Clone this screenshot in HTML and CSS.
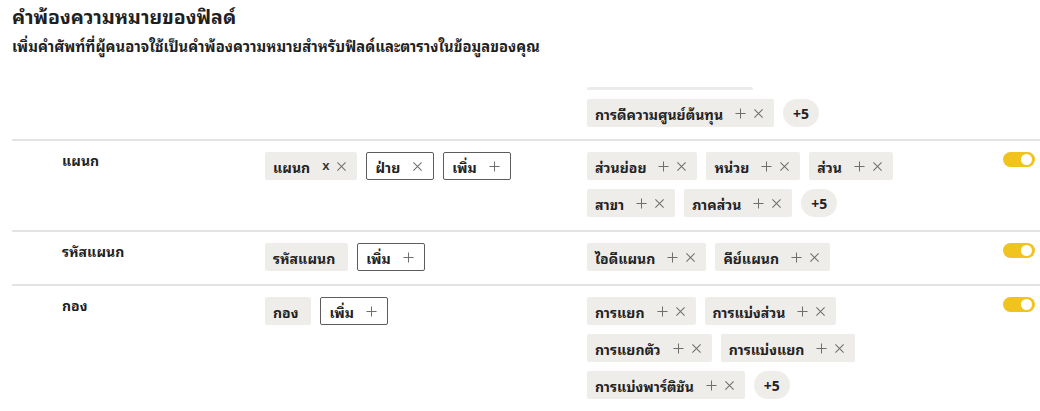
FILE: index.html
```html
<!DOCTYPE html>
<html lang="th">
<head>
<meta charset="utf-8">
<link rel="stylesheet" href="styles.css">
</head>
<body>
<div class="page">
  <h1 class="title">คำพ้องความหมายของฟิลด์</h1>
  <p class="subtitle">เพิ่มคำศัพท์ที่ผู้คนอาจใช้เป็นคำพ้องความหมายสำหรับฟิลด์และตารางในข้อมูลของคุณ</p>

  <div class="row row-tail">
    <div class="c-label"></div>
    <div class="c-names"></div>
    <div class="c-syn">
      <div class="scrollbar"></div>
      <div class="chips">
        <div class="line">
          <span class="chip">การดีความศูนย์ต้นทุน<span class="ic"><svg viewBox="0 0 12 12"><path d="M6 0.5V11.5M0.5 6H11.5"/></svg><svg viewBox="0 0 12 12"><path d="M1.5 1.5L10.5 10.5M10.5 1.5L1.5 10.5"/></svg></span></span>
          <span class="more">+5</span>
        </div>
      </div>
    </div>
    <div class="c-toggle"></div>
  </div>

  <div class="row">
    <div class="c-label">แผนก</div>
    <div class="c-names">
      <div class="chips">
        <div class="line">
          <span class="chip">แผนก<span class="ic"><span class="xt">x</span><svg viewBox="0 0 12 12"><path d="M1.5 1.5L10.5 10.5M10.5 1.5L1.5 10.5"/></svg></span></span>
          <span class="chip outline">ฝ่าย<span class="ic"><svg viewBox="0 0 12 12"><path d="M1.5 1.5L10.5 10.5M10.5 1.5L1.5 10.5"/></svg></span></span>
          <span class="chip outline">เพิ่ม<span class="ic"><svg viewBox="0 0 12 12"><path d="M6 0.5V11.5M0.5 6H11.5"/></svg></span></span>
        </div>
      </div>
    </div>
    <div class="c-syn">
      <div class="chips">
        <div class="line">
          <span class="chip">ส่วนย่อย<span class="ic"><svg viewBox="0 0 12 12"><path d="M6 0.5V11.5M0.5 6H11.5"/></svg><svg viewBox="0 0 12 12"><path d="M1.5 1.5L10.5 10.5M10.5 1.5L1.5 10.5"/></svg></span></span>
          <span class="chip">หน่วย<span class="ic"><svg viewBox="0 0 12 12"><path d="M6 0.5V11.5M0.5 6H11.5"/></svg><svg viewBox="0 0 12 12"><path d="M1.5 1.5L10.5 10.5M10.5 1.5L1.5 10.5"/></svg></span></span>
          <span class="chip">ส่วน<span class="ic"><svg viewBox="0 0 12 12"><path d="M6 0.5V11.5M0.5 6H11.5"/></svg><svg viewBox="0 0 12 12"><path d="M1.5 1.5L10.5 10.5M10.5 1.5L1.5 10.5"/></svg></span></span>
        </div>
        <div class="line">
          <span class="chip">สาขา<span class="ic"><svg viewBox="0 0 12 12"><path d="M6 0.5V11.5M0.5 6H11.5"/></svg><svg viewBox="0 0 12 12"><path d="M1.5 1.5L10.5 10.5M10.5 1.5L1.5 10.5"/></svg></span></span>
          <span class="chip">ภาคส่วน<span class="ic"><svg viewBox="0 0 12 12"><path d="M6 0.5V11.5M0.5 6H11.5"/></svg><svg viewBox="0 0 12 12"><path d="M1.5 1.5L10.5 10.5M10.5 1.5L1.5 10.5"/></svg></span></span>
          <span class="more">+5</span>
        </div>
      </div>
    </div>
    <div class="c-toggle"><span class="toggle"></span></div>
  </div>

  <div class="row">
    <div class="c-label">รหัสแผนก</div>
    <div class="c-names">
      <div class="chips">
        <div class="line">
          <span class="chip plain">รหัสแผนก</span>
          <span class="chip outline">เพิ่ม<span class="ic"><svg viewBox="0 0 12 12"><path d="M6 0.5V11.5M0.5 6H11.5"/></svg></span></span>
        </div>
      </div>
    </div>
    <div class="c-syn">
      <div class="chips">
        <div class="line">
          <span class="chip">ไอดีแผนก<span class="ic"><svg viewBox="0 0 12 12"><path d="M6 0.5V11.5M0.5 6H11.5"/></svg><svg viewBox="0 0 12 12"><path d="M1.5 1.5L10.5 10.5M10.5 1.5L1.5 10.5"/></svg></span></span>
          <span class="chip">คีย์แผนก<span class="ic"><svg viewBox="0 0 12 12"><path d="M6 0.5V11.5M0.5 6H11.5"/></svg><svg viewBox="0 0 12 12"><path d="M1.5 1.5L10.5 10.5M10.5 1.5L1.5 10.5"/></svg></span></span>
        </div>
      </div>
    </div>
    <div class="c-toggle"><span class="toggle"></span></div>
  </div>

  <div class="row">
    <div class="c-label">กอง</div>
    <div class="c-names">
      <div class="chips">
        <div class="line">
          <span class="chip plain">กอง</span>
          <span class="chip outline">เพิ่ม<span class="ic"><svg viewBox="0 0 12 12"><path d="M6 0.5V11.5M0.5 6H11.5"/></svg></span></span>
        </div>
      </div>
    </div>
    <div class="c-syn">
      <div class="chips">
        <div class="line">
          <span class="chip">การแยก<span class="ic"><svg viewBox="0 0 12 12"><path d="M6 0.5V11.5M0.5 6H11.5"/></svg><svg viewBox="0 0 12 12"><path d="M1.5 1.5L10.5 10.5M10.5 1.5L1.5 10.5"/></svg></span></span>
          <span class="chip">การแบ่งส่วน<span class="ic"><svg viewBox="0 0 12 12"><path d="M6 0.5V11.5M0.5 6H11.5"/></svg><svg viewBox="0 0 12 12"><path d="M1.5 1.5L10.5 10.5M10.5 1.5L1.5 10.5"/></svg></span></span>
        </div>
        <div class="line">
          <span class="chip">การแยกตัว<span class="ic"><svg viewBox="0 0 12 12"><path d="M6 0.5V11.5M0.5 6H11.5"/></svg><svg viewBox="0 0 12 12"><path d="M1.5 1.5L10.5 10.5M10.5 1.5L1.5 10.5"/></svg></span></span>
          <span class="chip">การแบ่งแยก<span class="ic"><svg viewBox="0 0 12 12"><path d="M6 0.5V11.5M0.5 6H11.5"/></svg><svg viewBox="0 0 12 12"><path d="M1.5 1.5L10.5 10.5M10.5 1.5L1.5 10.5"/></svg></span></span>
        </div>
        <div class="line">
          <span class="chip">การแบ่งพาร์ติชัน<span class="ic"><svg viewBox="0 0 12 12"><path d="M6 0.5V11.5M0.5 6H11.5"/></svg><svg viewBox="0 0 12 12"><path d="M1.5 1.5L10.5 10.5M10.5 1.5L1.5 10.5"/></svg></span></span>
          <span class="more">+5</span>
        </div>
      </div>
    </div>
    <div class="c-toggle"><span class="toggle"></span></div>
  </div>
</div>
</body>
</html>
```
FILE: styles.css
```css
* { box-sizing: border-box; }
html, body { margin: 0; padding: 0; background: #fff; }
body {
  font-family: "Noto Sans", "Noto Sans Thai Looped", "Noto Sans Thai", sans-serif;
  color: #1f1f1f;
  overflow: hidden;
}
.page { padding: 2px 0 0 12px; }
.title {
  margin: 0;
  font-size: 19.5px;
  font-weight: 700;
  line-height: 30px;
}
.subtitle {
  margin: 2px 0 0;
  font-size: 14.8px;
  font-weight: 700;
  line-height: 24px;
}
.row {
  display: grid;
  grid-template-columns: 253px 322px 1fr 45px;
  border-top: 2px solid #e3e3e3;
  padding: 11px 0 13px;
}
.row-tail {
  border-top: none;
  padding: 29px 0 12px;
}
.c-label {
  padding-left: 50px;
  font-size: 14px;
  font-weight: 700;
  line-height: 18px;
}
.scrollbar {
  width: 166px;
  height: 3px;
  background: #ebebeb;
  border-radius: 2px;
  margin-bottom: 9px;
}
.chips {
  display: flex;
  flex-direction: column;
  gap: 9px;
}
.line {
  display: flex;
  gap: 9px;
}
.chip {
  display: inline-flex;
  align-items: center;
  height: 28px;
  padding: 0 10px 0 8px;
  background: #efedea;
  border-radius: 2px;
  font-size: 14px;
  font-weight: 700;
  color: #222;
  white-space: nowrap;
}
.chip.plain { padding: 0 13px 0 8px; }
.chip.outline {
  background: #fff;
  border: 1px solid #5c5c5c;
  padding: 0 10px 0 8px;
}
.ic {
  display: inline-flex;
  align-items: center;
  gap: 7px;
  margin-left: 12px;
}
.ic svg {
  width: 11px;
  height: 11px;
  fill: none;
  stroke: #6e6e6e;
  stroke-width: 1.1;
}
.xt {
  font-size: 13px;
  font-weight: 600;
  color: #333;
  line-height: 1;
  margin-top: -2px;
}
.more {
  display: inline-flex;
  align-items: center;
  justify-content: center;
  height: 28px;
  width: 36px;
  border-radius: 14px;
  background: #efedea;
  font-size: 14px;
  font-weight: 700;
  color: #222;
}
.c-toggle { padding-left: 8px; }
.toggle {
  display: block;
  position: relative;
  width: 32px;
  height: 15px;
  border-radius: 8px;
  background: #f0c31f;
}
.toggle::after {
  content: "";
  position: absolute;
  right: 3px;
  top: 2px;
  width: 11px;
  height: 11px;
  border-radius: 50%;
  background: #fff;
}
```
